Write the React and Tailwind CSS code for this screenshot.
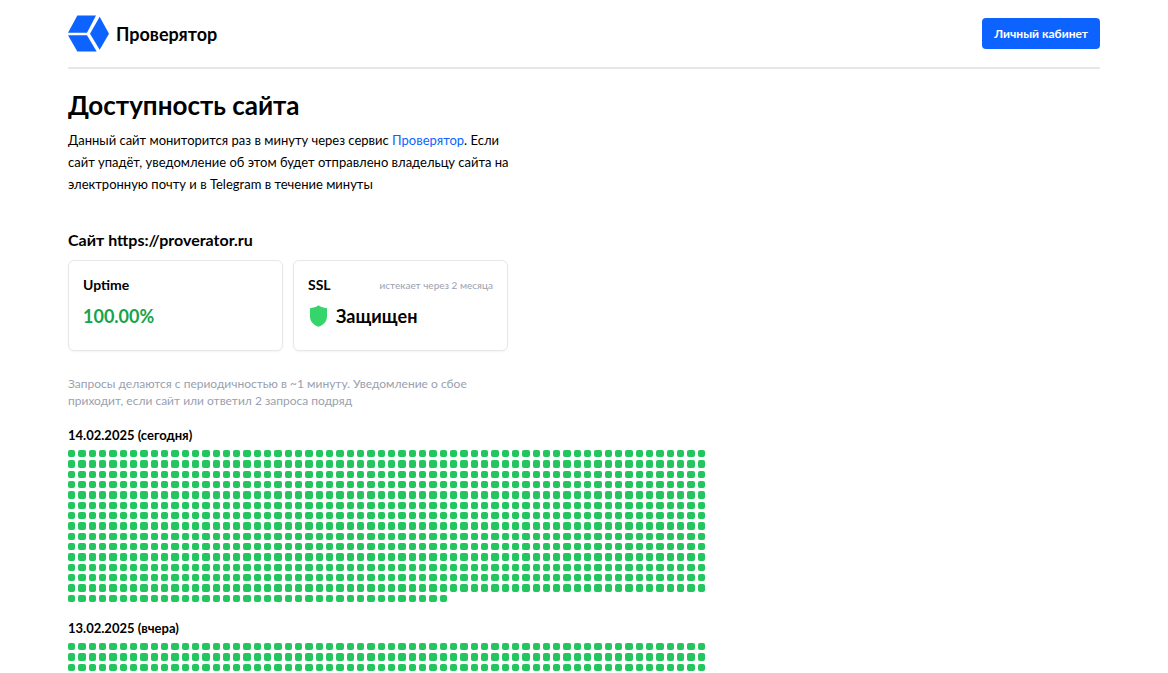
const days = [
  { date: "14.02.2025", label: "сегодня", checks: 905 },
  { date: "13.02.2025", label: "вчера", checks: 1440 },
];

function Logo() {
  return (
    <svg className="w-[41px] h-[37px]" viewBox="0 0 123 110" fill="#0d63ff" aria-hidden="true">
      <path d="M28 1H84L57 53H0Z" />
      <path d="M0 60H57L86 109H28Z" />
      <path d="M95 5L123 56L95 104L66 56Z" />
    </svg>
  );
}

function ShieldIcon() {
  return (
    <svg className="w-[17px] h-[22px]" viewBox="0 0 17 22" fill="#35d56b" aria-hidden="true">
      <path d="M8.5 0.3C11 2.1 13.7 3 17 3.2V11.5C17 16.5 13.5 20 8.5 21.8C3.5 20 0 16.5 0 11.5V3.2C3.3 3 6 2.1 8.5 0.3Z" />
    </svg>
  );
}

function Day({ date, label, checks }) {
  return (
    <section className="mt-[17px]">
      <h3 className="text-[13px] leading-[18px] font-bold">
        {date} ({label})
      </h3>
      <div className="mt-[6px] max-w-[637px] grid grid-cols-[repeat(62,minmax(0,1fr))] gap-[3px]">
        {Array.from({ length: checks }, (_, i) => (
          <span key={i} className="aspect-square rounded-[2px] bg-[#22c55e]" />
        ))}
      </div>
    </section>
  );
}

export default function App() {
  return (
    <div className="min-h-screen bg-white text-black font-[Lato,'Open_Sans',sans-serif] px-4">
      <div className="max-w-[1032px] mx-auto">
        {/* Header */}
        <header className="flex items-center justify-between pt-[15px] pb-[15px] border-b-2 border-gray-200">
          <a href="/" className="flex items-center gap-[7px]">
            <Logo />
            <span className="text-[18px] leading-6 font-bold">Проверятор</span>
          </a>
          <button className="h-[31px] px-3 rounded-[4px] bg-[#0d63ff] text-white text-[12px] leading-4 font-bold">
            Личный кабинет
          </button>
        </header>

        <main className="pt-5 pb-8">
          <h1 className="text-[26px] leading-8 font-bold">Доступность сайта</h1>
          <p className="mt-2 max-w-[442px] text-[13px] leading-[22px]">
            Данный сайт мониторится раз в минуту через сервис{" "}
            <a href="/" className="text-[#0d63ff]">Проверятор</a>. Если
            сайт упадёт, уведомление об этом будет отправлено владельцу сайта на
            электронную почту и в Telegram в течение минуты
          </p>

          {/* Site status */}
          <h2 className="mt-[33px] text-[16px] leading-6 font-bold">
            Сайт https://proverator.ru
          </h2>
          <div className="mt-2 max-w-[440px] grid grid-cols-2 gap-[10px]">
            <div className="h-[91px] px-[14px] pt-[14px] border border-gray-200 rounded-[6px] shadow-xs">
              <h3 className="text-[14px] leading-5 font-bold">Uptime</h3>
              <p className="mt-[9px] text-[18px] leading-6 font-bold text-[#16a34a]">100.00%</p>
            </div>
            <div className="h-[91px] px-[14px] pt-[14px] border border-gray-200 rounded-[6px] shadow-xs">
              <div className="flex items-center justify-between">
                <h3 className="text-[14px] leading-5 font-bold">SSL</h3>
                <span className="text-[10px] leading-4 text-gray-400">истекает через 2 месяца</span>
              </div>
              <p className="mt-[9px] pl-[2px] flex items-center gap-[9px] text-[18px] leading-6 font-bold">
                <ShieldIcon />
                Защищен
              </p>
            </div>
          </div>

          <p className="mt-6 max-w-[400px] text-[12px] leading-[17px] text-gray-400">
            Запросы делаются с периодичностью в ~1 минуту. Уведомление о сбое
            приходит, если сайт или ответил 2 запроса подряд
          </p>

          {days.map((day) => (
            <Day key={day.date} {...day} />
          ))}
        </main>
      </div>
    </div>
  );
}
